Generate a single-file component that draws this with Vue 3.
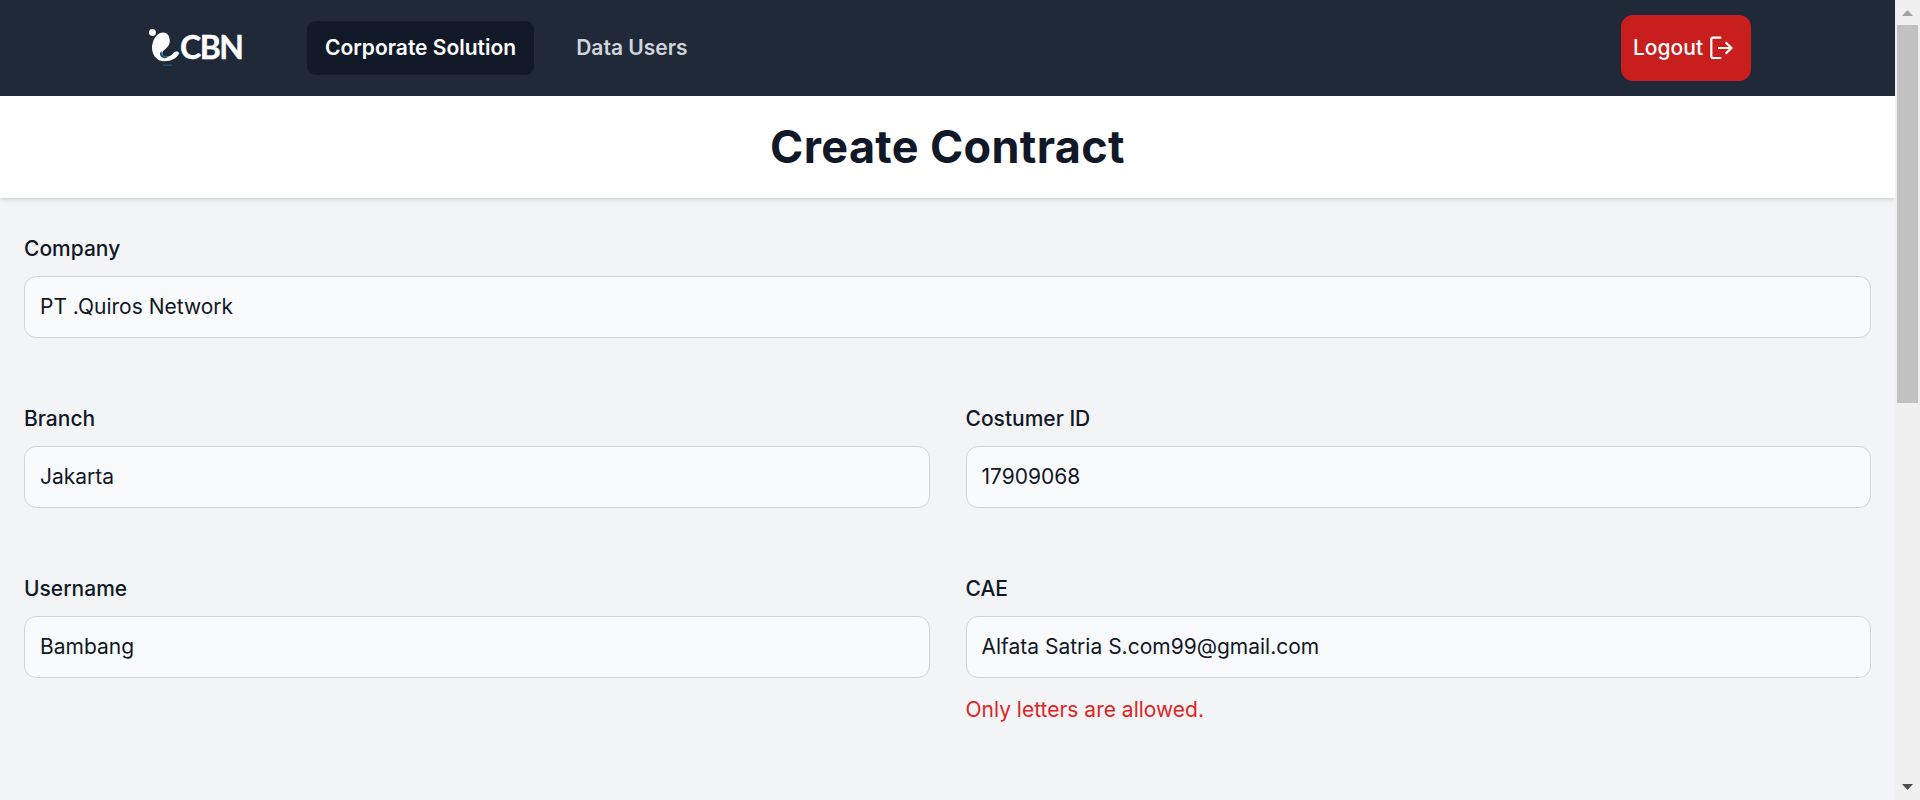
<script setup>
import { ref } from 'vue'

const links = [
  { label: 'Corporate Solution', active: true },
  { label: 'Data Users', active: false },
]

const fields = ref([
  { id: 'company', label: 'Company', value: 'PT .Quiros Network', wide: true },
  { id: 'branch', label: 'Branch', value: 'Jakarta' },
  { id: 'customer', label: 'Costumer ID', value: '17909068' },
  { id: 'username', label: 'Username', value: 'Bambang' },
  { id: 'cae', label: 'CAE', value: 'Alfata Satria S.com99@gmail.com', error: 'Only letters are allowed.' },
])
</script>

<template>
  <div class="window">
    <div class="page">
      <nav class="navbar">
        <div class="brand">
          <svg class="mark" viewBox="0 0 32 40" width="32" height="40">
            <circle cx="3.4" cy="4.4" r="3.5" fill="#fff" />
            <path d="M14 4.6C8.4 5 5 10.2 3.7 15C3 17.6 2.8 19.6 3.2 22C4.2 28.6 8.8 33.2 15.4 33.2C22.5 33.2 28 30 30.2 25.2C29.6 23.2 26.6 23 24.6 24.8C22 28.2 18 30 14.7 28C12.2 26.2 13.2 23.6 15.8 21.6C19 19 21 16 20.8 12.2C20.4 7.4 18 4.5 14 4.6Z" fill="#fff" />
            <path d="M13 22.8C11.6 26.4 14.4 29.4 19.4 28.8C15.8 31.8 10.3 29.6 11 24.8Z" fill="#1c5088" />
            <path d="M14 37.2H23" stroke="#2b4968" stroke-width="1.5" />
          </svg>
          <span class="brand-name">CBN</span>
        </div>
        <div class="links">
          <a v-for="link in links" :key="link.label" class="link" :class="{ active: link.active }">{{ link.label }}</a>
        </div>
        <button class="logout" type="button">
          <span>Logout</span>
          <svg width="24" height="24" viewBox="0 0 24 24" fill="none" stroke="#fff" stroke-width="2.2">
            <path d="M12.3 1.6H4Q2.3 1.6 2.3 3.3V20.3Q2.3 22 4 22H12.3" />
            <path d="M9 12H22.4M16.6 6.2L22.4 12L16.6 17.8" />
          </svg>
        </button>
      </nav>
      <header class="heading">
        <h1>Create Contract</h1>
      </header>
      <form class="form" @submit.prevent>
        <div v-for="field in fields" :key="field.id" class="field" :class="{ wide: field.wide }">
          <label :for="field.id">{{ field.label }}</label>
          <input :id="field.id" v-model="field.value" type="text" spellcheck="false" />
          <p v-if="field.error" class="error">{{ field.error }}</p>
        </div>
      </form>
    </div>
    <div class="scrollbar">
      <svg width="11" height="6" viewBox="0 0 11 6"><path d="M0 6L5.5 0L11 6Z" fill="#a3a3a3" /></svg>
      <div class="thumb"></div>
      <svg class="down" width="11" height="6" viewBox="0 0 11 6"><path d="M0 0L5.5 6L11 0Z" fill="#505050" /></svg>
    </div>
  </div>
</template>

<style>
body {
  margin: 0;
  overflow: hidden;
}
</style>

<style scoped>
.window {
  display: flex;
  height: 800px;
  overflow: hidden;
  font-family: Inter, "Liberation Sans", sans-serif;
  font-size: 21px;
  line-height: 30px;
  color: #111827;
}
.page {
  flex: 1;
  background: #f3f4f6;
}
.navbar {
  display: flex;
  align-items: center;
  box-sizing: border-box;
  height: 96px;
  padding: 0 144px 0 149px;
  background: #1f2937;
}
.brand {
  display: flex;
  align-items: center;
  width: 158px;
  height: 40px;
}
.mark {
  flex: none;
}
.brand-name {
  margin-left: -1px;
  padding-bottom: 2px;
  font-family: Lato, sans-serif;
  font-size: 32px;
  font-weight: 700;
  line-height: 40px;
  letter-spacing: -1.5px;
  color: #fff;
  -webkit-text-stroke: 0.4px #fff;
}
.links {
  display: flex;
  gap: 24px;
}
.link {
  padding: 12px 18px;
  border-radius: 9px;
  font-weight: 600;
  color: #d1d5db;
}
.link.active {
  background: #111827;
  color: #fff;
}
.logout {
  display: flex;
  align-items: center;
  gap: 6px;
  box-sizing: border-box;
  width: 130px;
  height: 66px;
  margin-left: auto;
  padding: 0 0 0 12px;
  border: 0;
  border-radius: 12px;
  background: #c81e1e;
  color: #fff;
  font: inherit;
  font-weight: 500;
}
.heading {
  padding: 24px 0;
  background: #fff;
  box-shadow: 0 1.5px 4.5px rgba(0, 0, 0, 0.1), 0 1.5px 3px -1.5px rgba(0, 0, 0, 0.1);
}
h1 {
  margin: 0;
  font-size: 45px;
  font-weight: 700;
  line-height: 54px;
  letter-spacing: 0.35px;
  text-align: center;
}
.form {
  display: grid;
  grid-template-columns: 1fr 1fr;
  grid-auto-rows: 170px;
  column-gap: 36px;
  padding: 36px 24px 0;
}
.wide {
  grid-column: span 2;
}
label {
  display: block;
  margin-bottom: 12px;
  font-weight: 500;
}
input {
  display: block;
  box-sizing: border-box;
  width: 100%;
  height: 62px;
  padding: 0 15px 2px;
  border: 1px solid #d1d5db;
  border-radius: 12px;
  outline: 0;
  background: #f9fafb;
  color: #111827;
  font: inherit;
  font-weight: 400;
}
.error {
  margin: 17px 0 0;
  font-weight: 400;
  color: #e02424;
}
.scrollbar {
  display: flex;
  flex-direction: column;
  align-items: center;
  box-sizing: border-box;
  width: 25px;
  padding: 10px 0;
  background: #f0f0f0;
}
.thumb {
  width: 21px;
  height: 378px;
  margin-top: 9px;
  background: #c1c1c1;
}
.down {
  margin-top: auto;
}
</style>
